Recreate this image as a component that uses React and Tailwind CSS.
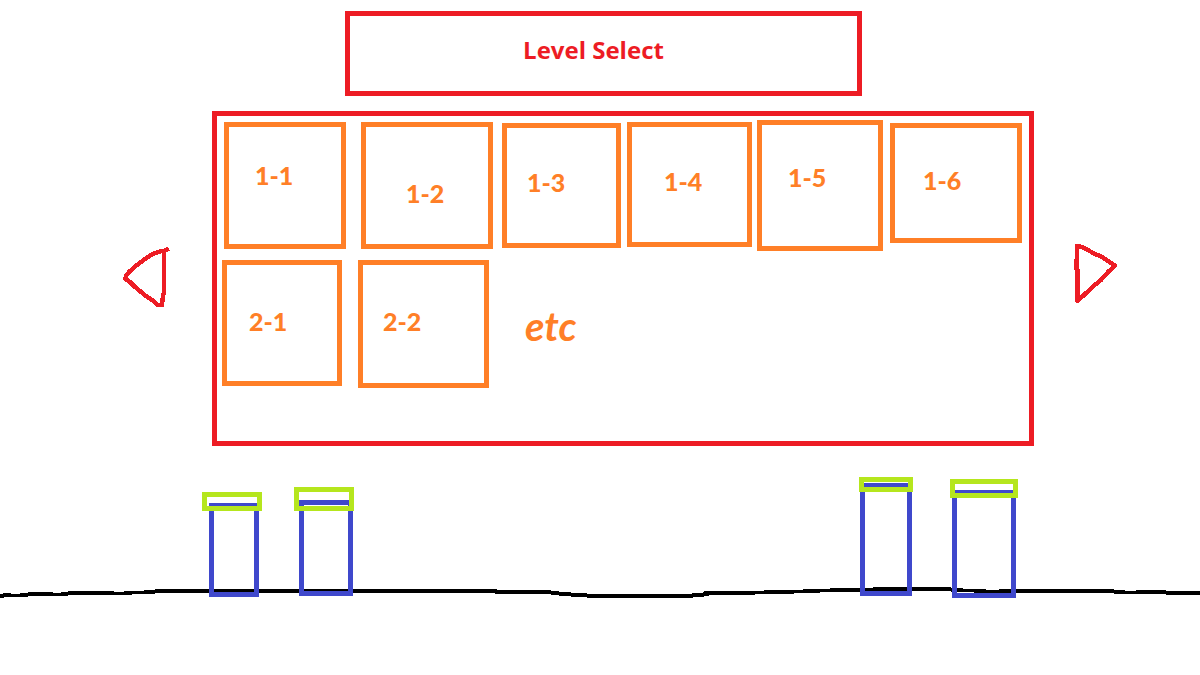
const worldOne = [
  { name: "1-1", box: "ml-[7px] mt-1.5 h-[127px] flex-[122_1_122px] pl-[26px] pt-8" },
  { name: "1-2", box: "ml-[15px] mt-1.5 h-[127px] flex-[132_1_132px] pl-10 pt-[50px]" },
  { name: "1-3", box: "ml-[9px] mt-[7px] h-[125px] flex-[119_1_119px] pl-5 pt-[38px]" },
  { name: "1-4", box: "ml-1.5 mt-1.5 h-[125px] flex-[125_1_125px] pl-8 pt-[38px]" },
  { name: "1-5", box: "ml-[5px] mt-1 h-[131px] flex-[126_1_126px] pl-[26px] pt-9" },
  { name: "1-6", box: "ml-[7px] mr-[7px] mt-[7px] h-[120px] flex-[132_1_132px] pl-7 pt-9" },
];

const worldTwo = [
  { name: "2-1", box: "ml-[5px] h-[126px] flex-[120_1_120px] pl-[22px] pt-10" },
  { name: "2-2", box: "ml-4 h-[128px] flex-[131_1_131px] pl-5 pt-10" },
];

// Ground segments: [left, right, top, bottom]
const ground = [
  [0, 4, 124, 128], [3, 11, 123, 127], [11, 20, 124, 127], [20, 28, 123, 127],
  [28, 53, 122, 126], [53, 61, 123, 126], [61, 68, 122, 126], [68, 114, 121, 125],
  [114, 124, 122, 125], [124, 132, 121, 125], [132, 144, 121, 124], [144, 155, 120, 124],
  [155, 497, 119, 123], [495, 551, 120, 124], [551, 559, 121, 125], [559, 571, 122, 126],
  [571, 587, 123, 127], [587, 693, 124, 128], [692, 704, 123, 127], [703, 709, 122, 126],
  [704, 755, 121, 125], [755, 764, 121, 124], [764, 794, 120, 124], [794, 803, 120, 123],
  [803, 820, 119, 123], [820, 830, 119, 122], [830, 873, 118, 122], [873, 951, 117, 121],
  [951, 963, 118, 122], [963, 974, 119, 122], [974, 986, 119, 123], [986, 999, 120, 123],
  [999, 1114, 119, 123], [1114, 1125, 120, 124], [1125, 1136, 121, 124],
  [1136, 1166, 120, 124], [1166, 1200, 121, 125],
];

const pillars = [
  { body: [209, 33, 50, 94], cap: [202, 22, 60, 19] },
  { body: [299, 30, 54, 96], cap: [294, 17, 60, 24] },
  { body: [860, 13, 52, 113], cap: [859, 7, 54, 15] },
  { body: [952, 20, 64, 108], cap: [950, 9, 68, 19] },
];

function Frame({ rect: [x, y, w, h], color }) {
  return (
    <rect x={x + 2.5} y={y + 2.5} width={w - 5} height={h - 5} fill="none" stroke={color} strokeWidth="5" />
  );
}

function Tile({ name, box }) {
  return (
    <button
      type="button"
      className={`flex min-w-0 items-start justify-start border-5 border-[#ff7f27] text-[25px] leading-8 font-black text-[#ff7f27] ${box}`}
    >
      {name}
    </button>
  );
}

export default function App() {
  return (
    <main className="min-h-screen bg-white pt-[11px] font-['Lato',sans-serif]">
      <header className="pl-[7px]">
        <h1 className="mx-auto h-[85px] max-w-[517px] border-5 border-[#ed1c24] pt-[18px] pr-5 text-center font-['Open_Sans',sans-serif] text-2xl leading-8 font-bold text-[#ed1c24]">
          Level Select
        </h1>
      </header>

      <section aria-label="Levels" className="mt-[15px] flex items-start pr-[81px] pl-[121px]">
        <button type="button" aria-label="Previous page" className="mt-[134px] mr-[41px] shrink-0">
          <svg width="50" height="64" viewBox="0 0 50 64" fill="none" stroke="#ed1c24" strokeWidth="4.4" strokeLinejoin="round" shapeRendering="crispEdges">
            <path d="M48 3.500 L44 5.500 L37 7 L32 9 L26 12.500 L16 20 L9 26 L5 30.500 L4.500 34 L9 37 L14 42 L25 51 L33 56.500 L37 60 L41 60 L42 50 L43 48 L43 6" />
          </svg>
        </button>

        <div className="min-w-0 flex-1 border-5 border-[#ed1c24] pb-[53px]">
          <div className="flex items-start">
            {worldOne.map((level) => (
              <Tile key={level.name} {...level} />
            ))}
          </div>
          <div className="mt-[9px] flex items-start">
            {worldTwo.map((level) => (
              <Tile key={level.name} {...level} />
            ))}
            <p className="mt-[46px] mr-[7px] min-w-0 flex-[533_1_533px] pl-9 text-[40px] leading-10 font-bold text-[#ff7f27] italic">
              etc
            </p>
          </div>
        </div>

        <button type="button" aria-label="Next page" className="mt-[131px] ml-[39px] shrink-0">
          <svg width="46" height="64" viewBox="0 0 46 64" fill="none" stroke="#ed1c24" strokeWidth="4.4" strokeLinejoin="round" shapeRendering="crispEdges">
            <path d="M4 4 L9 5 L15 8 L21 11.500 L28 14.500 L35 19 L42 23.500 L35 30 L28 38 L20 44.500 L11 53 L4.500 59 L4.500 28 L3.500 27 Z" />
          </svg>
        </button>
      </section>

      <svg aria-hidden="true" viewBox="0 0 1200 140" className="mt-6 block w-full" shapeRendering="crispEdges">
        {ground.map(([left, right, top, bottom]) => (
          <rect key={left} x={left} y={top} width={right - left} height={bottom - top} fill="#000" />
        ))}
        {pillars.map(({ body, cap }) => (
          <g key={body[0]}>
            <Frame rect={body} color="#3f48cc" />
            <Frame rect={cap} color="#b5e61d" />
          </g>
        ))}
      </svg>
    </main>
  );
}
